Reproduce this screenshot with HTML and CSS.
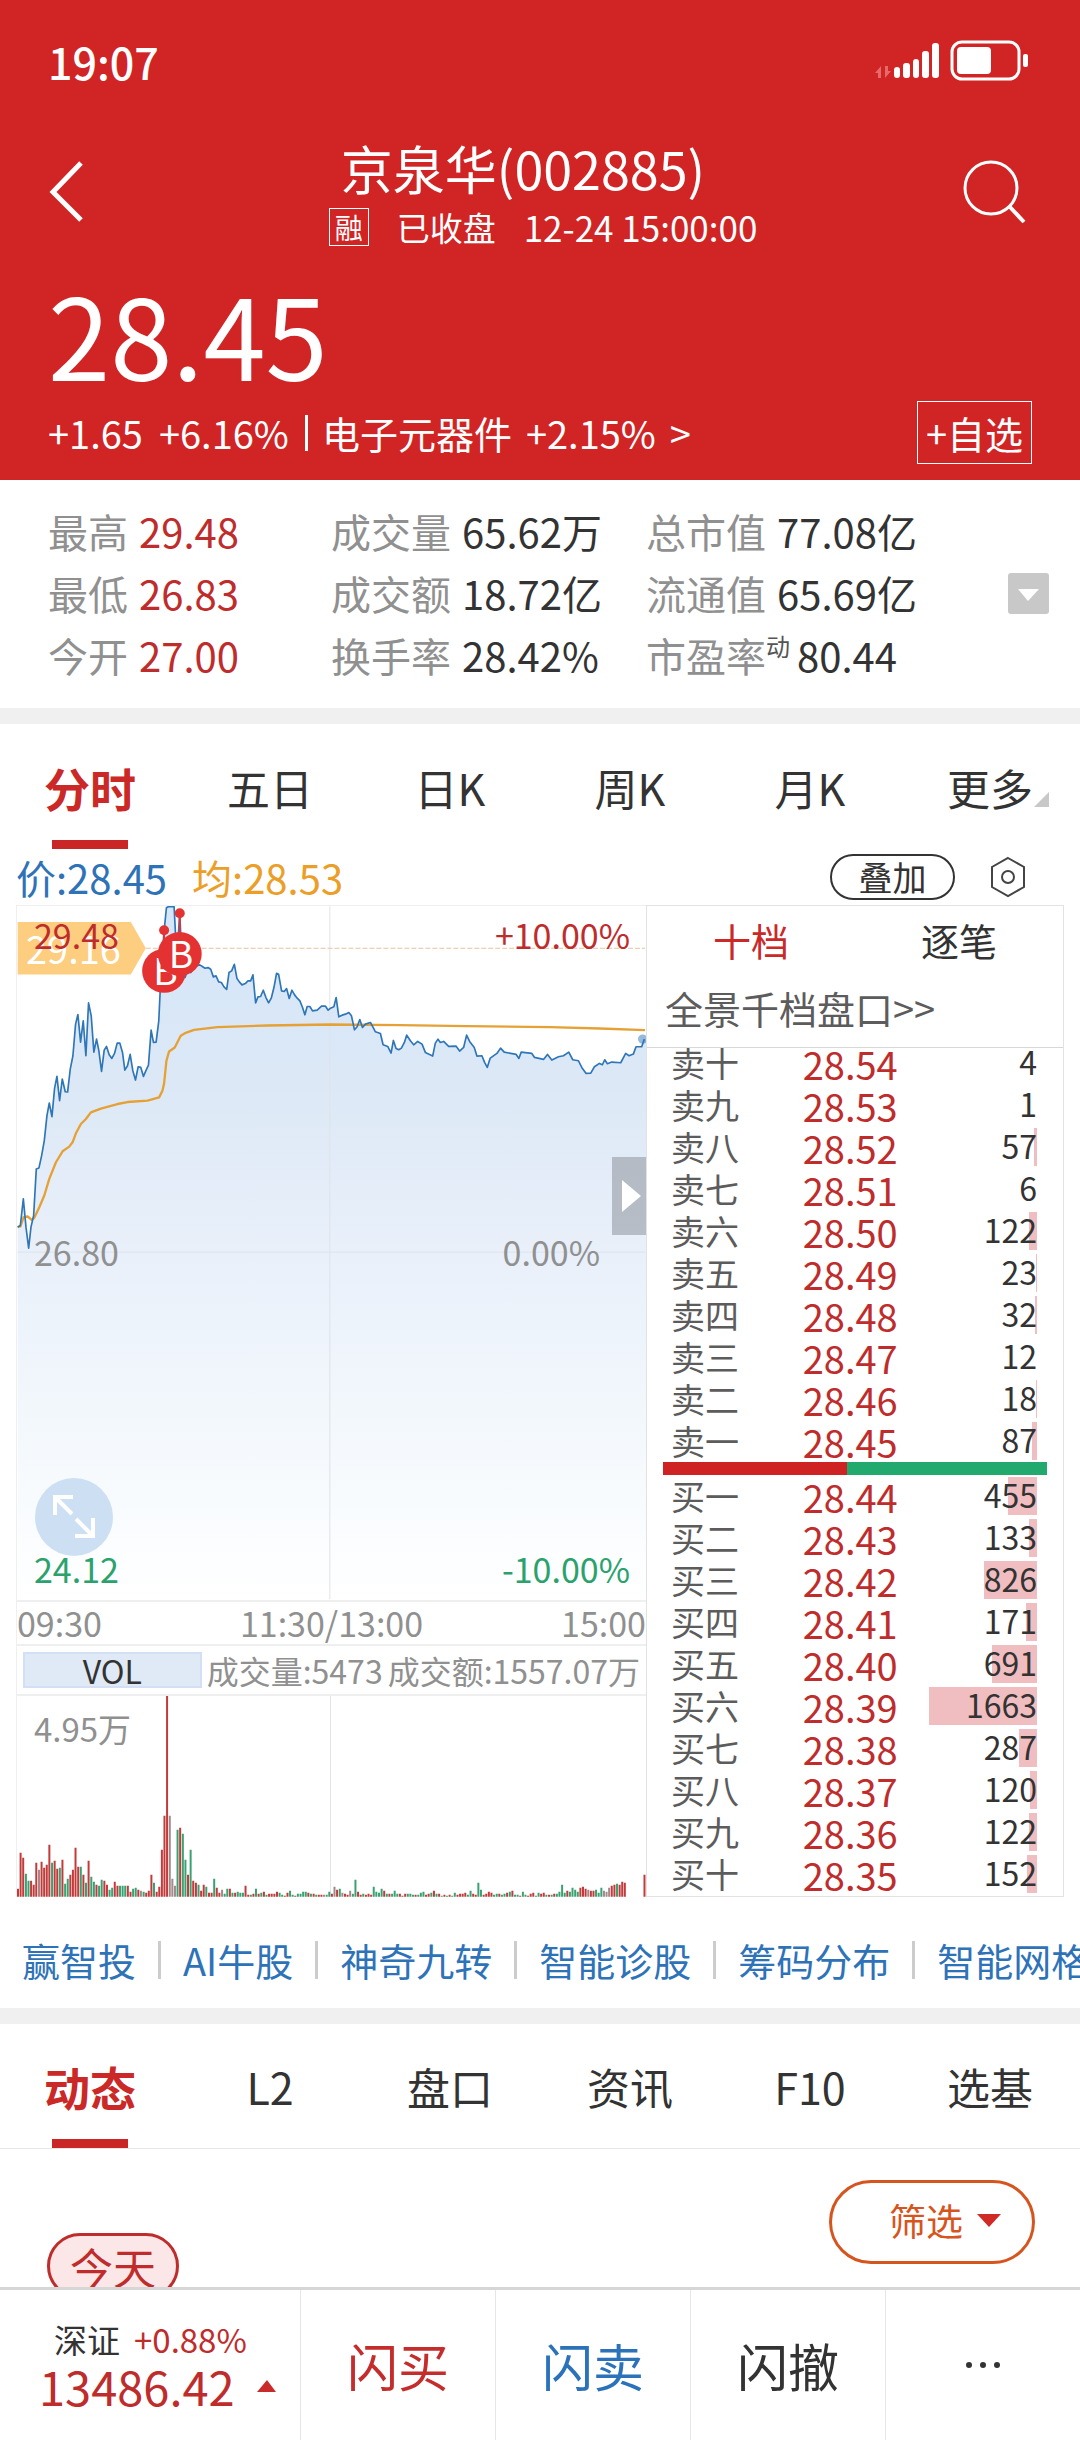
FILE: index.html
```html
<!DOCTYPE html>
<html lang="zh-CN">
<head>
    <meta charset="UTF-8">
    <meta name="viewport" content="width=device-width, initial-scale=1.0">
    <title>京泉华(002885)</title>
    <link rel="stylesheet" href="styles.css">
</head>
<body>
    <!-- 顶部行情 -->
    <header class="header">
        <div class="status-bar">
            <span class="clock">19:07</span>
            <svg class="status-icons" width="158" height="44" viewBox="874 39 158 44" aria-hidden="true">
                <g fill="#e8696a">
                    <path d="M875 73l6-7v12h-3v-5z"/>
                    <path d="M891 71l-6 7v-12h3v5z"/>
                </g>
                <g fill="#fff">
                    <rect x="894" y="67" width="6" height="11" rx="3"/>
                    <rect x="903" y="63" width="7" height="15" rx="3"/>
                    <rect x="913" y="59" width="6" height="19" rx="3"/>
                    <rect x="922" y="51" width="7" height="27" rx="3"/>
                    <rect x="932" y="43" width="7" height="35" rx="3"/>
                    <rect x="957" y="47" width="34" height="27" rx="4"/>
                    <rect x="1023" y="54" width="5" height="13" rx="2"/>
                </g>
                <rect x="952" y="42" width="67" height="37" rx="10" fill="none" stroke="#fff" stroke-width="3"/>
            </svg>
        </div>

        <div class="nav-bar">
            <button class="icon-button" type="button" aria-label="返回">
                <svg width="36" height="62" viewBox="0 0 36 62"><path d="M33 2L5 31l28 28" fill="none" stroke="#fff" stroke-width="5"/></svg>
            </button>
            <div class="title-box">
                <h1>京泉华(002885)</h1>
                <p class="subtitle"><span class="badge">融</span><span>已收盘</span><span class="date">12-24 15:00:00</span></p>
            </div>
            <button class="icon-button" type="button" aria-label="搜索">
                <svg width="64" height="64" viewBox="0 0 64 64" fill="none" stroke="#fff" stroke-width="3"><circle cx="29" cy="28" r="26"/><path d="M47 46l15 16" stroke-width="4"/></svg>
            </button>
        </div>

        <div class="price">28.45</div>

        <div class="change-row">
            <span>+1.65</span>
            <span>+6.16%</span>
            <a class="sector" href="#sector">
                <span>电子元器件</span>
                <span>+2.15%</span>
                <span>&gt;</span>
            </a>
            <button class="add-button" type="button">+自选</button>
        </div>
    </header>

    <!-- 指标 -->
    <section class="stats">
        <dl class="stat-list">
            <div><dt>最高</dt><dd class="up">29.48</dd></div>
            <div><dt>成交量</dt><dd>65.62万</dd></div>
            <div><dt>总市值</dt><dd>77.08亿</dd></div>
            <div><dt>最低</dt><dd class="up">26.83</dd></div>
            <div><dt>成交额</dt><dd>18.72亿</dd></div>
            <div><dt>流通值</dt><dd>65.69亿</dd></div>
            <div><dt>今开</dt><dd class="up">27.00</dd></div>
            <div><dt>换手率</dt><dd>28.42%</dd></div>
            <div><dt>市盈率<sup>动</sup></dt><dd>80.44</dd></div>
        </dl>
        <button class="expand-button" type="button" aria-label="展开">
            <svg width="41" height="41" viewBox="0 0 41 41"><path d="M10 16h21L20 28z" fill="#fff"/></svg>
        </button>
    </section>

    <nav class="tabs">
        <button class="tab active" type="button">分时</button>
        <button class="tab" type="button">五日</button>
        <button class="tab" type="button">日K</button>
        <button class="tab" type="button">周K</button>
        <button class="tab" type="button">月K</button>
        <button class="tab more" type="button">更多</button>
    </nav>

    <div class="legend">
        <span class="legend-price">价:28.45</span>
        <span class="legend-avg">均:28.53</span>
        <button class="overlay-button" type="button">叠加</button>
        <button class="icon-button" type="button" aria-label="设置">
            <svg width="36" height="42" viewBox="0 0 36 42" fill="none" stroke="#444" stroke-width="2"><path d="M18 2l16 9v20l-16 9-16-9V11z"/><circle cx="18" cy="21" r="6"/></svg>
        </button>
    </div>

    <main class="quote">
        <!-- 分时图 -->
        <section class="chart-column">
            <div class="chart">
                <svg class="chart-svg" viewBox="48 75 1890 2085" aria-hidden="true">
                    <defs>
                        <linearGradient id="area" x1="0" y1="77" x2="0" y2="2160" gradientUnits="userSpaceOnUse">
                            <stop offset="0" stop-color="#d4e6f8"/>
                            <stop offset="0.25" stop-color="#dce8f6"/>
                            <stop offset="0.5" stop-color="#e9f0fa"/>
                            <stop offset="0.75" stop-color="#f3f8fc"/>
                            <stop offset="0.92" stop-color="#fbfdff"/>
                            <stop offset="1" stop-color="#fff"/>
                        </linearGradient>
                    </defs>
                    <path id="areaPath" fill="url(#area)"/>
                    <g stroke="#dfe3e9" stroke-width="3">
                        <path d="M50 1115H1936"/>
                        <path d="M988 76V2158"/>
                    </g>
                    <path d="M435 202H1935" stroke="#e6c59c" stroke-width="3" stroke-dasharray="15 6"/>
                    <polyline id="avgLine" fill="none" stroke="#e5a136" stroke-width="7" stroke-linejoin="round"/>
                    <polyline id="priceLine" fill="none" stroke="#2e76b8" stroke-width="5" stroke-linejoin="round"/>
                    <circle cx="1928" cy="475" r="14" fill="#2e76b8" opacity="0.5"/>
                    <path d="M50 123H390L435 202L390 281H50z" fill="#fdcd80"/>
                    <!-- 买点 -->
                    <g fill="#e43232">
                        <path d="M487 148h6v90h-6zM534 97h6v90h-6z"/>
                        <circle cx="490" cy="148" r="15"/>
                        <circle cx="537" cy="97" r="15"/>
                        <circle cx="490" cy="270" r="66"/>
                    </g>
                    <text class="pin-text" x="494" y="311">B</text>
                    <circle cx="537" cy="219" r="66" fill="#e43232"/>
                    <text class="pin-text" x="541" y="260">B</text>
                </svg>
                <span class="tag-price">29.16</span>
                <div class="chart-labels">
                    <div class="label-row up"><span>29.48</span><span>+10.00%</span></div>
                    <div class="label-row flat"><span>26.80</span><span>0.00%</span></div>
                    <div class="label-row down"><span>24.12</span><span>-10.00%</span></div>
                </div>
                <button class="collapse-button" type="button" aria-label="收起盘口">
                    <svg width="34" height="78" viewBox="0 0 34 78"><path d="M10 23v32l19-16z" fill="#fff"/></svg>
                </button>
                <button class="full-button" type="button" aria-label="全屏">
                    <svg width="78" height="78" viewBox="0 0 78 78" fill="none" stroke="#fff" stroke-width="4"><path d="M20 37V19h18M20 19l17 17M58 40v18H40M58 58L41 41"/></svg>
                </button>
            </div>
            <div class="time-row"><span>09:30</span><span>11:30/13:00</span><span>15:00</span></div>
            <div class="vol-header">
                <button class="vol-button" type="button">VOL</button>
                <span>成交量:5473</span>
                <span>成交额:1557.07万</span>
            </div>
            <div class="volume">
                <svg class="chart-svg" viewBox="0 0 630 201" aria-hidden="true">
                    <path d="M314 0V201" stroke="#e4e4e4"/>
                    <path id="volRed" stroke="#c23a3a" stroke-width="2"/>
                    <path id="volGreen" stroke="#3aa173" stroke-width="2"/>
                    <path id="volGray" stroke="#a08a8a" stroke-width="2"/>
                </svg>
                <span class="vol-max">4.95万</span>
            </div>
        </section>

        <!-- 十档盘口 -->
        <section class="book">
            <div class="book-tabs">
                <button class="book-tab active" type="button">十档</button>
                <button class="book-tab" type="button">逐笔</button>
            </div>
            <a class="book-link" href="#depth">全景千档盘口&gt;&gt;</a>
            <table class="book-table" aria-label="卖盘"><tbody id="asks"></tbody></table>
            <div class="ratio"><span class="ratio-buy"></span><span class="ratio-sell"></span></div>
            <table class="book-table" aria-label="买盘"><tbody id="bids"></tbody></table>
        </section>
    </main>

    <nav class="links">
        <a href="#win">赢智投</a>
        <a href="#ai">AI牛股</a>
        <a href="#nine">神奇九转</a>
        <a href="#diagnose">智能诊股</a>
        <a href="#chips">筹码分布</a>
        <a href="#grid">智能网格</a>
    </nav>

    <nav class="tabs tabs-info">
        <button class="tab active" type="button">动态</button>
        <button class="tab" type="button">L2</button>
        <button class="tab" type="button">盘口</button>
        <button class="tab" type="button">资讯</button>
        <button class="tab" type="button">F10</button>
        <button class="tab" type="button">选基</button>
    </nav>

    <section class="feed">
        <span class="today">今天</span>
        <button class="filter-button" type="button">筛选
            <svg width="24" height="13" viewBox="0 0 24 13"><path d="M0 0h24L12 13z" fill="#cf2a26"/></svg>
        </button>
    </section>

    <!-- 底部交易栏 -->
    <footer class="trade-bar">
        <a class="index-box" href="#index">
            <span class="index-top"><span>深证</span><span class="up">+0.88%</span></span>
            <span class="index-value up">13486.42
                <svg width="19" height="12" viewBox="0 0 19 12"><path d="M0 12h19L10 0z" fill="#c92a2a"/></svg>
            </span>
        </a>
        <button class="trade-button buy" type="button">闪买</button>
        <button class="trade-button sell" type="button">闪卖</button>
        <button class="trade-button" type="button">闪撤</button>
        <button class="trade-button" type="button" aria-label="更多操作">
            <svg width="36" height="8" viewBox="0 0 36 8" fill="#333"><circle cx="4" cy="4" r="3"/><circle cx="18" cy="4" r="3"/><circle cx="32" cy="4" r="3"/></svg>
        </button>
    </footer>

    <script src="script.js"></script>
</body>
</html>
```
FILE: styles.css
```css
* {
    box-sizing: border-box;
}

body {
    margin: 0;
    height: 100vh;
    display: flex;
    flex-direction: column;
    overflow: hidden;
    background-color: #fff;
    color: #333;
    font-family: "Noto Sans CJK SC", "Noto Sans", sans-serif;
    font-size: 38px;
}

button {
    padding: 0;
    border: none;
    background: none;
    color: inherit;
    font: inherit;
    cursor: pointer;
}

a {
    color: inherit;
    text-decoration: none;
}

svg {
    display: block;
}

.up {
    color: #bf2c2c;
}
.flat {
    color: #909090;
}
.down {
    color: #2ba26c;
}

/* 顶部 */
.header {
    flex: none;
    padding: 0 48px 16px;
    background-color: #d12425;
    color: #fff;
}

.status-bar {
    display: flex;
    justify-content: space-between;
    align-items: center;
    height: 122px;
}
.clock {
    font-size: 43px;
    line-height: 60px;
    font-weight: 500;
}

.nav-bar {
    display: flex;
    justify-content: space-between;
    align-items: center;
    padding: 16px 6px 0 0;
}
.title-box {
    display: flex;
    flex-direction: column;
    align-items: center;
    gap: 10px;
}
.title-box h1 {
    margin: 0;
    font-size: 52px;
    line-height: 60px;
    font-weight: 400;
}
.subtitle {
    display: flex;
    align-items: center;
    gap: 28px;
    margin: 0;
    padding-left: 40px;
    font-size: 33px;
    line-height: 38px;
}
.badge {
    width: 40px;
    border: 1px solid #fff;
    font-size: 28px;
    line-height: 36px;
    text-align: center;
}
.date {
    font-size: 35px;
}

.price {
    margin-top: 28px;
    font-size: 112px;
    line-height: 116px;
}

.change-row {
    display: flex;
    align-items: center;
    gap: 16px;
    margin-top: 11px;
    font-size: 38px;
    line-height: 42px;
}
.sector {
    display: flex;
    gap: 14px;
    padding-left: 14px;
    border-left: 3px solid #fff;
    line-height: 36px;
}
.add-button {
    width: 115px;
    height: 63px;
    margin-left: auto;
    border: 1px solid #fff;
    white-space: nowrap;
}

/* 指标 */
.stats {
    flex: none;
    display: flex;
    align-items: center;
    padding: 20px 31px 22px 48px;
    border-bottom: 16px solid #f0f0f0;
}
.stat-list {
    flex: 1;
    display: grid;
    grid-template-columns: 283fr 315fr 362fr;
    margin: 0;
    font-size: 40px;
    line-height: 62px;
}
.stat-list div {
    display: flex;
    gap: 11px;
    height: 62px;
    white-space: nowrap;
}
.stat-list dt {
    color: #909090;
}
.stat-list dd {
    margin: 0;
}
.stat-list sup {
    margin-right: -4px;
    font-size: 24px;
    line-height: 24px;
    vertical-align: 16px;
    color: #555;
}
.expand-button {
    border-radius: 3px;
    background-color: #c8c8c8;
}

/* 标签页 */
.tabs {
    flex: none;
    display: grid;
    grid-template-columns: repeat(6, 1fr);
    height: 125px;
}
.tab {
    position: relative;
    font-size: 43px;
    line-height: 120px;
}
.tab.active {
    color: #cb2828;
    font-weight: 700;
    font-size: 46px;
}
.tab.active::after {
    content: "";
    position: absolute;
    left: calc(50% - 38px);
    bottom: 0;
    width: 76px;
    height: 9px;
    background-color: #cb2626;
}
.tab.more::after {
    content: "";
    position: absolute;
    right: 31px;
    bottom: 42px;
    border-left: 15px solid transparent;
    border-bottom: 15px solid #c8c8c8;
}
.tabs-info {
    border-bottom: 1px solid #e6e6e6;
}

.legend {
    flex: none;
    display: flex;
    align-items: center;
    gap: 25px;
    height: 56px;
    padding: 0 54px 0 16px;
    font-size: 40px;
    line-height: 48px;
}
.legend-price {
    color: #2e73b8;
}
.legend-avg {
    color: #eb9f28;
}
.overlay-button {
    width: 125px;
    height: 46px;
    margin-left: auto;
    margin-right: 10px;
    border: 2px solid #333;
    border-radius: 23px;
    font-size: 34px;
    line-height: 38px;
}

/* 分时图 */
.quote {
    flex: none;
    display: grid;
    grid-template-columns: 630fr 418fr;
    padding: 0 16px;
}
.chart-column {
    min-width: 0;
    border-left: 1px solid #efefef;
    font-size: 34px;
    line-height: 36px;
}
.chart {
    position: relative;
    border-top: 1px solid #efefef;
    border-bottom: 2px solid #efefef;
}
.chart-svg {
    width: 100%;
    height: auto;
}
.pin-text {
    fill: #fff;
    font-size: 112px;
    text-anchor: middle;
}
.tag-price {
    position: absolute;
    top: 22px;
    left: 9px;
    color: #fff;
    font-size: 38px;
    line-height: 40px;
}
.chart-labels {
    position: absolute;
    inset: 11px 16px 13px 17px;
    display: flex;
    flex-direction: column;
    justify-content: space-between;
}
.label-row {
    display: flex;
    justify-content: space-between;
}
.label-row.flat {
    padding-right: 30px;
}
.collapse-button {
    position: absolute;
    top: 251px;
    right: 0;
    background-color: rgba(150, 155, 163, 0.6);
}
.full-button {
    position: absolute;
    left: 18px;
    bottom: 44px;
    border-radius: 50%;
    background-color: rgba(190, 214, 239, 0.75);
}
.time-row {
    display: flex;
    justify-content: space-between;
    padding: 3px 0;
    color: #909090;
}
.vol-header {
    display: flex;
    align-items: center;
    gap: 5px;
    height: 52px;
    padding: 0 6px;
    border-top: 2px solid #efefef;
    border-bottom: 2px solid #efefef;
    color: #909090;
    font-size: 32px;
    white-space: nowrap;
}
.vol-button {
    flex: 1;
    height: 36px;
    border: 2px solid #d2dff5;
    background-color: #e0eaf6;
    color: #333;
    line-height: 30px;
}
.volume {
    position: relative;
}
.vol-max {
    position: absolute;
    top: 14px;
    left: 17px;
    color: #909090;
    font-size: 33px;
}

/* 盘口 */
.book {
    border: 1px solid #e2e2e2;
}
.book-tabs {
    display: grid;
    grid-template-columns: 1fr 1fr;
    height: 66px;
}
.book-tab.active {
    color: #cb2828;
}
.book-link {
    display: block;
    height: 76px;
    padding-left: 18px;
    border-bottom: 1px solid #d8d8d8;
    color: #5c5c5c;
    line-height: 72px;
}
.book-table {
    width: calc(100% - 50px);
    margin: 0 25px 0 24px;
    border-collapse: collapse;
    table-layout: fixed;
}
/* 第一行卖盘贴住分隔线 */
.book-link + .book-table {
    margin-top: -6px;
}
.book-table tr {
    height: 42px;
}
.book-table th,
.book-table td {
    padding: 0;
    line-height: 42px;
    font-weight: 400;
    text-align: left;
}
.book-table th {
    width: 36%;
    color: #5c5c5c;
    font-size: 34px;
}
.book-table .book-price {
    color: #bf2c2c;
    padding-top: 2px;
    font-size: 38px;
    line-height: 40px;
}
.book-table .book-qty {
    position: relative;
    z-index: 0;
    font-size: 32px;
    line-height: 38px;
    padding-bottom: 4px;
    text-align: right;
}
.depth {
    position: absolute;
    top: 2px;
    right: 0;
    z-index: -1;
    height: 38px;
    background-color: #f0bdc0;
}
.ratio {
    display: flex;
    height: 13px;
    margin: 0 16px;
}
.ratio-buy {
    flex: 48;
    background-color: #cf2222;
}
.ratio-sell {
    flex: 52;
    background-color: #22a96e;
}

/* 工具链接 */
.links {
    flex: none;
    display: flex;
    align-items: center;
    height: 127px;
    padding-top: 16px;
    border-bottom: 16px solid #f0f0f0;
    overflow: hidden;
    color: #2e73b8;
    white-space: nowrap;
}
.links a {
    padding: 0 22px;
    border-right: 3px solid #ccc;
    line-height: 38px;
}

/* 动态 */
.feed {
    flex: 1;
    display: flex;
    justify-content: space-between;
    align-items: flex-start;
    min-height: 0;
    padding: 31px 45px 0 47px;
    overflow: hidden;
}
.today {
    margin-top: 53px;
    padding: 0 20px;
    border: 3px solid #bf2c2c;
    border-radius: 34px;
    background-color: #fbe7e7;
    color: #bf2c2c;
    font-size: 43px;
    line-height: 60px;
}
.filter-button {
    display: flex;
    align-items: center;
    gap: 14px;
    height: 84px;
    padding: 0 31px 3px 57px;
    border: 3px solid #d6551f;
    border-radius: 42px;
    color: #d6551f;
    font-size: 37px;
}

/* 底部交易栏 */
.trade-bar {
    flex: none;
    display: grid;
    grid-template-columns: 300fr 195fr 195fr 195fr 195fr;
    height: 153px;
    border-top: 3px solid #d6d6d6;
    background-color: #fff;
}
.index-box {
    padding: 28px 0 0 39px;
}
.index-top {
    display: flex;
    gap: 14px;
    padding-left: 15px;
    font-size: 33px;
    line-height: 42px;
}
.index-value {
    display: flex;
    align-items: center;
    gap: 22px;
    font-size: 47px;
    line-height: 52px;
}
.trade-button {
    display: flex;
    justify-content: center;
    align-items: center;
    border-left: 1px solid #e6e6e6;
    font-size: 51px;
    line-height: 60px;
}
.trade-button.buy {
    color: #c52c2c;
}
.trade-button.sell {
    color: #2b72bb;
}
```
FILE: script.js
```javascript
// 坐标: x,y 成对
const pricePoints = '50,1040 58,1035 67,955 75,1040 83,1103 90,1040 98,1005 106,865 114,862 122,825 130,780 138,705 145,667 153,708 161,622 168,587 176,660 184,595 193,633 200,634 208,565 216,525 224,430 231,401 239,484 247,420 255,525 263,366 271,405 279,514 287,475 294,510 302,572 310,508 317,497 325,522 333,533 341,518 349,487 357,487 365,515 372,568 380,555 388,521 396,570 404,598 412,558 420,560 428,587 436,568 443,553 451,448 458,485 466,484 474,420 482,250 490,150 497,80 503,77 520,77 528,230 537,100 545,260 553,290 560,270 570,275 585,255 597,252 605,257 613,262 622,260 630,265 638,288 646,285 654,303 662,305 670,318 678,326 685,275 693,270 701,250 709,293 716,303 724,312 734,308 742,300 750,300 757,282 765,366 772,348 780,347 788,328 796,350 804,366 812,352 820,320 828,277 834,280 843,330 851,332 858,323 866,353 874,328 882,342 890,352 898,360 906,380 913,402 920,377 928,377 936,390 950,388 963,376 975,376 983,388 990,382 1000,378 1007,350 1015,408 1025,403 1035,400 1045,395 1053,405 1062,447 1070,438 1078,416 1086,440 1095,430 1110,425 1118,440 1125,453 1140,458 1148,492 1162,497 1172,517 1179,479 1187,503 1195,507 1203,502 1212,485 1219,463 1230,480 1240,492 1252,482 1265,490 1275,515 1297,526 1305,487 1313,475 1320,485 1330,482 1345,497 1367,496 1378,511 1390,500 1399,463 1408,482 1422,500 1430,526 1445,525 1453,545 1461,560 1470,532 1490,518 1501,502 1512,514 1548,521 1556,533 1563,514 1595,518 1603,530 1630,536 1642,521 1655,538 1675,528 1690,525 1706,514 1718,537 1735,540 1745,560 1758,578 1772,577 1783,558 1798,548 1807,552 1814,537 1822,549 1835,544 1862,546 1877,518 1887,525 1900,520 1908,498 1925,498 1933,475';
const avgPoints = '50,1040 58,1038 68,1010 80,1008 92,1018 100,1012 115,980 130,945 145,895 165,845 185,812 205,798 215,785 225,758 240,730 255,715 270,695 300,684 350,670 380,664 440,660 475,650 485,630 490,608 497,540 505,512 522,500 540,465 555,456 580,447 650,439 800,434 990,431 1200,433 1400,436 1650,439 1800,443 1935,448';

// 每分钟成交量, r 涨 g 跌 x 平
const volumes = 'r8 r44 r39 g23 g16 r16 r12 r34 x27 r35 r29 r32 r52 g34 r36 r28 g29 r37 g13 g18 r22 r27 r49 r30 g30 r22 g14 r36 g20 g15 r12 g11 g17 r16 r12 g7 g9 r15 r11 g11 g11 g11 r11 r5 g8 g9 r7 x6 g5 r4 r6 r22 g14 r5 r10 r47 r81 r201 x81 x18 x11 g67 r69 g63 g37 r22 g47 r16 r14 g12 r6 r12 g10 r4 r4 g18 r9 r4 x7 g3 g8 r8 g4 r4 g5 g4 g4 r11 r2 g2 r3 g8 r3 g4 r5 g2 r3 r3 r3 r5 g4 g2 r1 r4 g6 g2 r1 g3 g3 g5 g5 r4 g3 r3 g2 r2 r2 x2 g2 g5 r3 x10 r7 g8 x4 r3 r2 x6 g3 g17 r5 r2 g3 r2 r3 r2 g10 g5 g4 g8 r6 g3 r3 g3 g6 g3 r3 r1 r3 g3 g3 g2 r2 g2 g4 g5 r2 r3 g4 r6 g3 r3 g1 r2 g1 r2 g1 g4 r2 r3 r3 r4 g2 g6 r3 r2 g14 g7 r2 r3 r5 r4 g2 g3 r3 g2 g3 r4 g5 r6 g2 g2 r1 g5 g2 r1 r3 r4 g1 g4 r3 r4 g2 r2 g2 r3 g3 g5 g12 g4 r6 g5 g9 g7 g5 r9 r10 r8 x7 r6 r6 g7 g4 g9 x6 x5 x9 r11 r12 g13 r12 r15 r14'.split(' ');

const asks = [
    ['卖十', '28.54', 4], ['卖九', '28.53', 1], ['卖八', '28.52', 57], ['卖七', '28.51', 6], ['卖六', '28.50', 122],
    ['卖五', '28.49', 23], ['卖四', '28.48', 32], ['卖三', '28.47', 12], ['卖二', '28.46', 18], ['卖一', '28.45', 87]
];
const bids = [
    ['买一', '28.44', 455], ['买二', '28.43', 133], ['买三', '28.42', 826], ['买四', '28.41', 171], ['买五', '28.40', 691],
    ['买六', '28.39', 1663], ['买七', '28.38', 287], ['买八', '28.37', 120], ['买九', '28.36', 122], ['买十', '28.35', 152]
];

// 分时线
function renderLines() {
    document.getElementById('priceLine').setAttribute('points', pricePoints);
    document.getElementById('avgLine').setAttribute('points', avgPoints);
    document.getElementById('areaPath').setAttribute('d', `M50 2160L${pricePoints} 1938,475 1938,2160z`);
}

// 成交量柱
function renderVolume() {
    const paths = { r: '', g: '', x: '' };
    volumes.forEach((item, index) => {
        const x = (1 + index * 2.62).toFixed(1);
        paths[item[0]] += `M${x} 201v-${item.slice(1)}`;
    });
    paths.r += 'M628.5 201v-22';
    document.getElementById('volRed').setAttribute('d', paths.r);
    document.getElementById('volGreen').setAttribute('d', paths.g);
    document.getElementById('volGray').setAttribute('d', paths.x);
}

// 盘口
function renderBook(id, rows) {
    const maxWidth = 108;
    const maxQty = 1663;
    document.getElementById(id).innerHTML = rows.map(([name, price, qty]) => {
        const width = Math.ceil(qty / maxQty * maxWidth - 0.8);
        return `<tr><th scope="row">${name}</th><td class="book-price">${price}</td><td class="book-qty"><span class="depth" style="width: ${width}px"></span>${qty}</td></tr>`;
    }).join('');
}

renderLines();
renderVolume();
renderBook('asks', asks);
renderBook('bids', bids);
```
